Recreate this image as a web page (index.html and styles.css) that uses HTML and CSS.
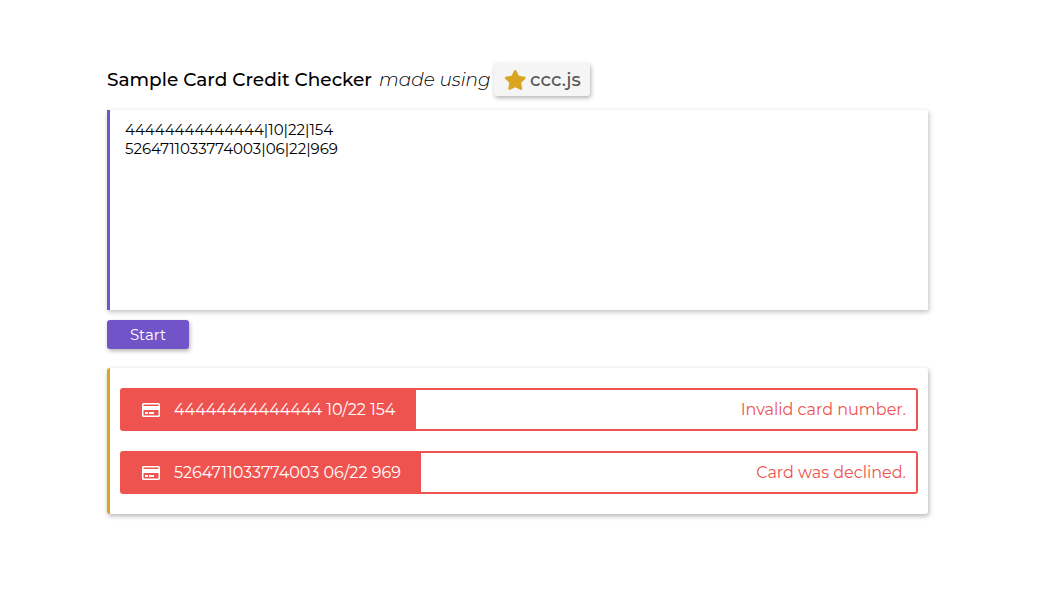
FILE: index.html
```html
<!DOCTYPE html>
<html lang="en">
<head>
<meta charset="utf-8">
<title>Sample Card Credit Checker</title>
<link rel="stylesheet" href="styles.css">
</head>
<body>
<main class="page">
  <h1 class="title">
    <span class="title-main">Sample Card Credit Checker</span>
    <em class="title-sub">made using</em>
    <a class="repo" href="#">
      <svg class="star" viewBox="0 0 576 512" aria-hidden="true"><path d="M259.300 17.800L194 150.200 47.900 171.500c-26.200 3.800-36.700 36.100-17.700 54.600l105.700 103-25 145.500c-4.500 26.300 23.200 46 46.400 33.700L288 439.600l130.700 68.700c23.200 12.200 50.900-7.400 46.400-33.700l-25-145.500 105.700-103c19-18.500 8.500-50.800-17.700-54.600L382 150.200 316.700 17.800c-11.700-23.600-45.600-24.100-57.400 0z"/></svg>
      <span>ccc.js</span>
    </a>
  </h1>
  <textarea class="input-panel" spellcheck="false">44444444444444|10|22|154
5264711033774003|06|22|969</textarea>
  <button class="start" type="button">Start</button>
  <section class="results">
    <div class="result">
      <div class="card-label">
        <svg class="card-icon" viewBox="0 0 576 512" aria-hidden="true"><path d="M527.900 32H48.100C21.500 32 0 53.500 0 80v352c0 26.500 21.500 48 48.100 48h479.800c26.600 0 48.100-21.500 48.100-48V80c0-26.500-21.500-48-48.100-48zM54.100 80h467.800c3.300 0 6 2.700 6 6v42H48.100V86c0-3.300 2.700-6 6-6zm467.800 352H54.100c-3.300 0-6-2.700-6-6V256h479.800v170c0 3.300-2.700 6-6 6zM192 332v40c0 6.600-5.400 12-12 12h-72c-6.600 0-12-5.400-12-12v-40c0-6.600 5.400-12 12-12h72c6.600 0 12 5.400 12 12zm192 0v40c0 6.600-5.400 12-12 12H236c-6.600 0-12-5.400-12-12v-40c0-6.600 5.400-12 12-12h136c6.600 0 12 5.400 12 12z"/></svg>
        <span>44444444444444 10/22 154</span>
      </div>
      <div class="message">Invalid card number.</div>
    </div>
    <div class="result">
      <div class="card-label">
        <svg class="card-icon" viewBox="0 0 576 512" aria-hidden="true"><path d="M527.900 32H48.100C21.500 32 0 53.500 0 80v352c0 26.500 21.500 48 48.100 48h479.800c26.600 0 48.100-21.500 48.100-48V80c0-26.500-21.500-48-48.100-48zM54.100 80h467.800c3.300 0 6 2.700 6 6v42H48.100V86c0-3.300 2.700-6 6-6zm467.800 352H54.100c-3.300 0-6-2.700-6-6V256h479.800v170c0 3.300-2.700 6-6 6zM192 332v40c0 6.600-5.400 12-12 12h-72c-6.600 0-12-5.400-12-12v-40c0-6.600 5.400-12 12-12h72c6.600 0 12 5.400 12 12zm192 0v40c0 6.600-5.400 12-12 12H236c-6.600 0-12-5.400-12-12v-40c0-6.600 5.400-12 12-12h136c6.600 0 12 5.400 12 12z"/></svg>
        <span>5264711033774003 06/22 969</span>
      </div>
      <div class="message">Card was declined.</div>
    </div>
  </section>
</main>
</body>
</html>
```
FILE: styles.css
```css
* { box-sizing: border-box; }
html, body { margin: 0; background: #fff; }
body {
  min-height: 601px;
  font-family: Montserrat, Inter, "Liberation Sans", sans-serif;
  color: #000;
}
.page {
  width: 821px;
  margin-left: 107px;
  padding: 62px 0 40px;
}
.title {
  display: flex;
  align-items: center;
  height: 36px;
  margin: 0 0 12px;
  font-size: 18.500px;
  font-weight: 500;
  line-height: 36px;
}
.title-main { margin-right: 7px; }
.title-sub { font-weight: 300; margin-right: 3px; }
.repo {
  display: flex;
  align-items: center;
  gap: 4px;
  height: 33px;
  margin-bottom: 1px;
  padding: 1px 9px 0 10px;
  color: #555;
  background: #f5f5f5;
  border-radius: 3px;
  box-shadow: 1px 2px 4px rgba(0,0,0,.3);
  text-decoration: none;
}
.star { width: 22.500px; height: 20px; fill: #daa520; }
.input-panel {
  display: block;
  width: 100%;
  height: 200px;
  margin: 0;
  padding: 10px 15px;
  border: 0;
  border-left: 3px solid #7254c9;
  outline: 0;
  resize: none;
  background: #fff;
  color: #000;
  font: inherit;
  font-size: 15px;
  line-height: 19px;
  box-shadow: 1px 2px 5px rgba(0,0,0,.25);
}
.start {
  display: block;
  width: 82px;
  height: 29px;
  margin: 10px 0 19px;
  padding: 0;
  border: 0;
  border-radius: 3px;
  color: #fff;
  background: #7254c9;
  font: inherit;
  font-size: 15px;
  box-shadow: 1px 2px 4px rgba(0,0,0,.3);
}
.results {
  display: flex;
  flex-direction: column;
  gap: 20px;
  height: 146px;
  padding: 20px 10px 0 10px;
  border-left: 3px solid #daa520;
  border-radius: 3px;
  background: #fff;
  box-shadow: 1px 2px 5px rgba(0,0,0,.3);
}
.result {
  display: flex;
  height: 43px;
  font-size: 16px;
}
.card-label {
  display: flex;
  align-items: center;
  gap: 14px;
  padding: 0 20.400px 0 22px;
  color: #fff;
  background: #ef5350;
  border-radius: 3px 0 0 3px;
  white-space: nowrap;
}
.card-icon { width: 18px; height: 16px; fill: #fff; }
.message {
  flex: 1;
  display: flex;
  align-items: center;
  justify-content: flex-end;
  padding-right: 10px;
  color: #ef5350;
  border: 2px solid #ef5350;
  border-left: 0;
  border-radius: 0 3px 3px 0;
}
```
